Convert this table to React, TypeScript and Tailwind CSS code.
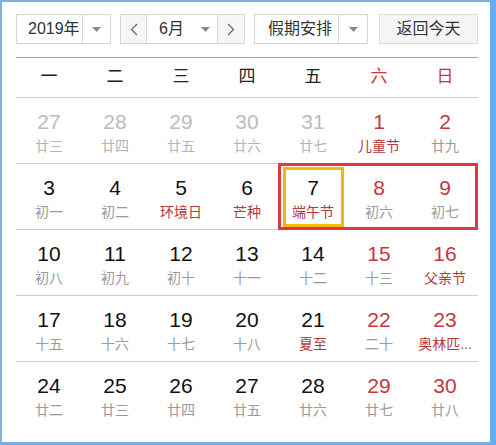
import React from 'react';

type Day = {
  n: number;
  l: string;
  out?: boolean; // outside this month
  red?: boolean; // number in red
  fest?: boolean; // lunar line is a festival / term
};

const weeks: Day[][] = [
  [
    { n: 27, l: '廿三', out: true },
    { n: 28, l: '廿四', out: true },
    { n: 29, l: '廿五', out: true },
    { n: 30, l: '廿六', out: true },
    { n: 31, l: '廿七', out: true },
    { n: 1, l: '儿童节', red: true, fest: true },
    { n: 2, l: '廿九', red: true },
  ],
  [
    { n: 3, l: '初一' },
    { n: 4, l: '初二' },
    { n: 5, l: '环境日', fest: true },
    { n: 6, l: '芒种', fest: true },
    { n: 7, l: '端午节', fest: true },
    { n: 8, l: '初六', red: true },
    { n: 9, l: '初七', red: true },
  ],
  [
    { n: 10, l: '初八' },
    { n: 11, l: '初九' },
    { n: 12, l: '初十' },
    { n: 13, l: '十一' },
    { n: 14, l: '十二' },
    { n: 15, l: '十三', red: true },
    { n: 16, l: '父亲节', red: true, fest: true },
  ],
  [
    { n: 17, l: '十五' },
    { n: 18, l: '十六' },
    { n: 19, l: '十七' },
    { n: 20, l: '十八' },
    { n: 21, l: '夏至', fest: true },
    { n: 22, l: '二十', red: true },
    { n: 23, l: '奥林匹...', red: true, fest: true },
  ],
  [
    { n: 24, l: '廿二' },
    { n: 25, l: '廿三' },
    { n: 26, l: '廿四' },
    { n: 27, l: '廿五' },
    { n: 28, l: '廿六' },
    { n: 29, l: '廿七', red: true },
    { n: 30, l: '廿八', red: true },
  ],
];

const weekdays = ['一', '二', '三', '四', '五', '六', '日'];

function Caret() {
  return (
    <svg width="9" height="5" viewBox="0 0 9 5">
      <path d="M0 0h9L4.5 5z" fill="#8a8a8a" />
    </svg>
  );
}

function Chevron({ dir }: { dir: 'left' | 'right' }) {
  return (
    <svg width="8" height="13" viewBox="0 0 8 13">
      <path
        d={dir === 'left' ? 'M7 1L1.5 6.5 7 12' : 'M1 1l5.5 5.5L1 12'}
        fill="none"
        stroke="#666"
        strokeWidth="1.2"
      />
    </svg>
  );
}

function DayCell({ d }: { d: Day }) {
  const numColor = d.out ? 'text-[#bcbcbc]' : d.red ? 'text-[#c7363d]' : 'text-[#111]';
  const lunarColor = d.out ? 'text-[#b5b5b5]' : d.fest ? 'text-[#b8363c]' : 'text-[#9a9a9a]';
  return (
    <div className="flex flex-col items-center pt-[12px]">
      <span className={`text-[21px] leading-[24px] font-['Liberation_Sans',sans-serif] ${numColor}`}>
        {d.n}
      </span>
      <span className={`mt-[4px] text-[14px] leading-[16px] whitespace-nowrap ${lunarColor}`}>{d.l}</span>
    </div>
  );
}

export default function App() {
  return (
    <div
      className="flex w-[496px] h-[445px] bg-[#6aacef] font-['Liberation_Sans','Noto_Sans_CJK_SC',sans-serif]"
    >
      <div className="w-[490px] h-[444px] bg-white border-l-2 border-t-2 border-b-2 border-[#7db1da] pl-[14px] pt-[12px]">
        <div className="w-[462px]">
          {/* toolbar */}
          <div className="flex h-[30px] text-[16px] text-[#333]">
            <div className="flex w-[95px] border border-[#d4d4d4]">
              <span className="flex-1 flex items-center pl-[11px]">2019年</span>
              <span className="w-[28px] flex items-center justify-center border-l border-[#d4d4d4]">
                <Caret />
              </span>
            </div>
            <div className="flex w-[125px] ml-[9px] border border-[#d4d4d4]">
              <span className="w-[26px] flex items-center justify-center bg-[#f6f6f6] border-r border-[#d4d4d4]">
                <Chevron dir="left" />
              </span>
              <span className="flex-1 flex items-center pl-[12px]">
                6月
                <span className="ml-[17px] flex">
                  <Caret />
                </span>
              </span>
              <span className="w-[27px] flex items-center justify-center bg-[#f6f6f6] border-l border-[#d4d4d4]">
                <Chevron dir="right" />
              </span>
            </div>
            <div className="flex w-[114px] ml-[9px] border border-[#d4d4d4]">
              <span className="flex-1 flex items-center pl-[13px]">假期安排</span>
              <span className="w-[29px] flex items-center justify-center border-l border-[#d4d4d4]">
                <Caret />
              </span>
            </div>
            <div className="flex w-[99px] ml-[11px] items-center justify-center border border-[#dcdcdc] bg-[#f5f5f5]">
              返回今天
            </div>
          </div>

          <div className="mt-[13px] h-px bg-[#7eb0d8]" />

          {/* weekday header */}
          <div className="grid grid-cols-7 h-[40px] border-b border-[#cfcfcf] text-[17px] items-center">
            {weekdays.map((w, i) => (
              <span key={w} className={`text-center pb-[2px] ${i >= 5 ? 'text-[#c23a3f]' : 'text-[#222]'}`}>
                {w}
              </span>
            ))}
          </div>

          {/* weeks */}
          {weeks.map((week, wi) => (
            <div
              key={wi}
              className={`relative grid grid-cols-7 h-[66px] ${wi < weeks.length - 1 ? 'border-b border-[#cfcfcf]' : ''}`}
            >
              {week.map((d) => (
                <DayCell key={`${wi}-${d.n}`} d={d} />
              ))}
              {wi === 1 && (
                <>
                  <div className="absolute left-[262px] -top-[1px] w-[200px] h-[67px] border-[3px] border-[#dd3a3e] pointer-events-none" />
                  <div className="absolute left-[267px] top-[3px] w-[61px] h-[60px] border-[3px] border-[#f6b60d] pointer-events-none" />
                </>
              )}
            </div>
          ))}
        </div>
      </div>
    </div>
  );
}
